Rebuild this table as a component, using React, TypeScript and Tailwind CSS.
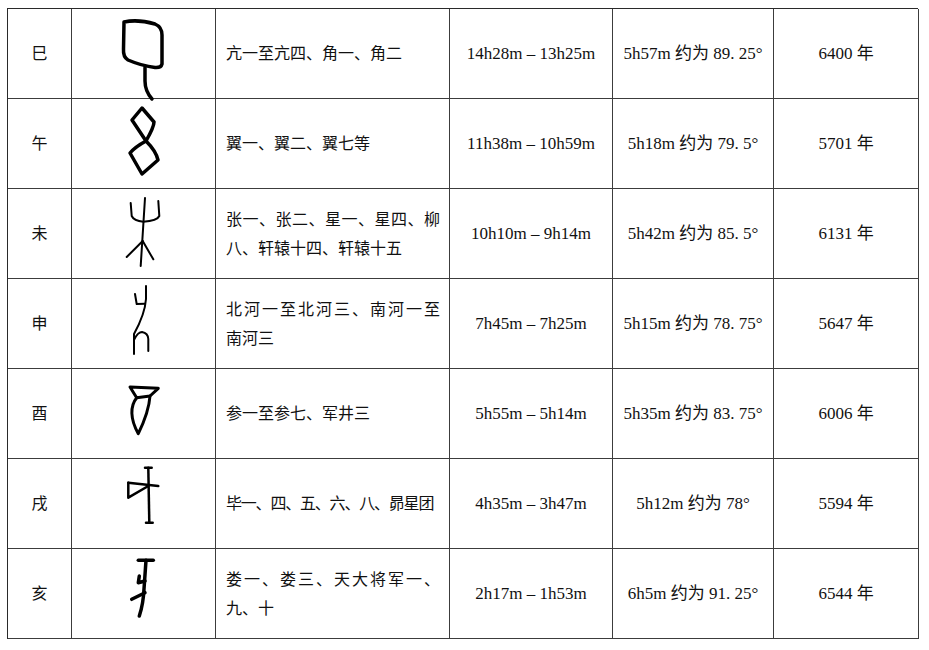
import React from "react";

type Row = {
  zhi: string;
  glyph: React.ReactNode;
  stars: string[];
  tight?: boolean;
  range: string;
  span: string;
  years: string;
};

// ancient-script glyphs, drawn in a 144x90 cell box
const Si = () => (
  <g>
    <path d="M52 13 Q66 10 83 15 Q90 18 90 26 L90 55 Q89 59 83 58.5 Q70 57 56 51 Q51 48 51.5 40 Z" />
    <path d="M73 58.5 L73 72 Q73 82 80 90" />
  </g>
);

const Wu = () => (
  <path d="M74 42 L60 21 L70 9 L82 23 Q82 28 74 42 Q63 48 58 54 L70 75 L86 61 Q84 52 74 42" />
);

const Wei = () => (
  <g strokeWidth={2}>
    <path d="M73 9 L68.7 77" />
    <path d="M58.7 14 L59.7 27 Q62 32 71.3 32.7 Q85 32 87.3 27 L86.3 12" />
    <path d="M70.7 52 L54.7 68" />
    <path d="M70.7 52 L81.3 70.3" />
  </g>
);

const Shen = () => (
  <g strokeWidth={2}>
    <path d="M74 7 L74 20 Q73 35 62 55 L62 75" />
    <path d="M63 15 L64.7 25 L73 24.7" />
    <path d="M62.5 60 Q66 53 70 53 Q76 54 76.3 60 L76.3 72" />
  </g>
);

const You = () => (
  <g filter="url(#soft)" strokeWidth={3}>
    <path d="M58 18 L86.3 19.3 L78 27 L64.7 28.7 Z" />
    <path d="M64.7 28.7 C58 37 58 50 66.3 64.7 C71 55 77 42 78 27" />
  </g>
);

const Xu = () => (
  <g strokeWidth={2.5}>
    <path d="M76.3 8.7 L77.3 63.7" />
    <path d="M73 8.7 L79.7 8.7" />
    <path d="M74 63.7 L80.7 63.7" />
    <path d="M56.3 23.7 L86.3 27" />
    <path d="M56.3 23.7 L56.3 38.7 L76.3 27" />
  </g>
);

const Hai = () => (
  <g>
    <path d="M66.3 11.3 L81.3 11.3" />
    <path d="M74 11.3 L72 40 Q71.3 55 67.3 67" />
    <path d="M67.3 27 L66.3 33.7 L73 32" />
    <path d="M73 43.7 L59.7 50.3" />
  </g>
);

const rows: Row[] = [
  { zhi: "巳", glyph: <Si />, stars: ["亢一至亢四、角一、角二"], range: "14h28m – 13h25m", span: "5h57m 约为 89. 25°", years: "6400 年" },
  { zhi: "午", glyph: <Wu />, stars: ["翼一、翼二、翼七等"], range: "11h38m – 10h59m", span: "5h18m 约为 79. 5°", years: "5701 年" },
  { zhi: "未", glyph: <Wei />, stars: ["张一、张二、星一、星四、柳", "八、轩辕十四、轩辕十五"], range: "10h10m – 9h14m", span: "5h42m 约为 85. 5°", years: "6131 年" },
  { zhi: "申", glyph: <Shen />, stars: ["北河一至北河三、南河一至", "南河三"], range: "7h45m – 7h25m", span: "5h15m 约为 78. 75°", years: "5647 年" },
  { zhi: "酉", glyph: <You />, stars: ["参一至参七、军井三"], range: "5h55m – 5h14m", span: "5h35m 约为 83. 75°", years: "6006 年" },
  { zhi: "戌", glyph: <Xu />, stars: ["毕一、四、五、六、八、昴星团"], tight: true, range: "4h35m – 3h47m", span: "5h12m 约为 78°", years: "5594 年" },
  { zhi: "亥", glyph: <Hai />, stars: ["娄一、娄三、天大将军一、", "九、十"], range: "2h17m – 1h53m", span: "6h5m 约为 91. 25°", years: "6544 年" },
];

const cell = "h-[90px] border-r border-b border-[#3c3c3c] flex items-center";

export default function App() {
  return (
    <div className="w-[929px] h-[650px] bg-white pt-[8px] pl-[7px] text-[#111] [font-family:'Liberation_Serif','Noto_Sans_CJK_SC',serif]">
      <svg width="0" height="0" className="absolute">
        <defs>
          <filter id="soft">
            <feGaussianBlur stdDeviation="0.5" />
          </filter>
        </defs>
      </svg>
      <div className="grid grid-cols-[64px_144px_234px_163px_161px_145px] w-[911px] border-l border-t border-[#2a2a2a]">
        {rows.map((r) => (
          <React.Fragment key={r.zhi}>
            <div className={`${cell} justify-center text-[16px]`}>{r.zhi}</div>
            <div className={`${cell} justify-center overflow-visible`}>
              <svg
                width="144"
                height="90"
                viewBox="0 0 144 90"
                className="overflow-visible"
                fill="none"
                stroke="#000"
                strokeWidth={3.5}
                strokeLinecap="round"
                strokeLinejoin="round"
              >
                {r.glyph}
              </svg>
            </div>
            <div className={`${cell} pl-[10px] text-[16px]`}>
              <div className="w-[214px] leading-[29px]">
                {r.stars.map((line, i) => (
                  <div
                    key={i}
                    className={
                      i < r.stars.length - 1
                        ? "text-justify [text-align-last:justify]"
                        : r.tight
                          ? "whitespace-nowrap tracking-[-1.2px]"
                          : "whitespace-nowrap"
                    }
                  >
                    {line}
                  </div>
                ))}
              </div>
            </div>
            <div className={`${cell} justify-center text-[17px]`}>{r.range}</div>
            <div className={`${cell} justify-center text-[17px]`}>{r.span}</div>
            <div className={`${cell} justify-center text-[17px]`}>{r.years}</div>
          </React.Fragment>
        ))}
      </div>
    </div>
  );
}
